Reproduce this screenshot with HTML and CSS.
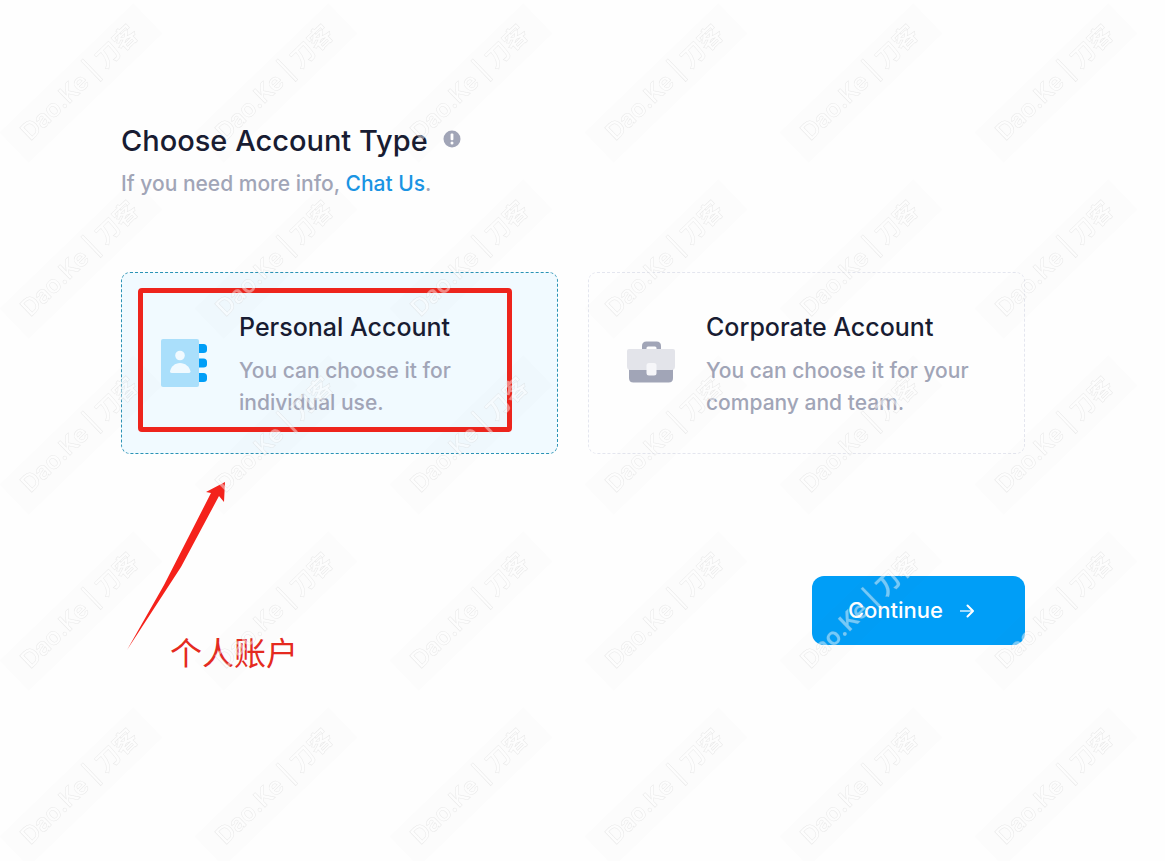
FILE: index.html
```html
<!DOCTYPE html>
<html lang="en">
<head>
    <meta charset="UTF-8">
    <meta name="viewport" content="width=device-width, initial-scale=1.0">
    <title>Choose Account Type</title>
    <link rel="stylesheet" href="styles.css">
</head>
<body>
    <main class="page">
        <header class="heading">
            <h1>Choose Account Type
                <svg class="info" viewBox="0 0 18 18" aria-hidden="true">
                    <circle cx="9" cy="9" r="8.500" fill="#a1a5b7"/>
                    <rect x="7.600" y="3.600" width="2.800" height="6.600" rx="1" fill="#fff"/>
                    <circle cx="9" cy="13" r="1.500" fill="#fff"/>
                </svg>
            </h1>
            <p>If you need more info, <a href="#">Chat Us</a>.</p>
        </header>

        <form class="account-form">
            <div class="options">
                <div class="option">
                    <input type="radio" name="account_type" id="personal" checked>
                    <label class="card" for="personal">
                        <svg class="card-icon" viewBox="0 0 48 48" aria-hidden="true">
                            <path d="M37 5h6.500q3.500 0 3.500 3.500v2.500q0 3-3.500 3h-6.500zM37 19.500h6.500q3.500 0 3.500 3.500v2.500q0 3-3.500 3h-6.500zM37 34h6.500q3.500 0 3.500 3.500v2.500q0 3-3.500 3h-6.500z" fill="#009ef7"/>
                            <rect x="1" width="38" height="48" rx="2" fill="#aadffb"/>
                            <circle cx="20" cy="16.500" r="4.800" fill="#f1faff"/>
                            <path d="M10 32.500c1-5 5-8.500 10-8.500s9.500 3.500 10.500 8.500q0 1.500-2 1.500h-16.500q-2 0-2-1.500z" fill="#f1faff"/>
                        </svg>
                        <span class="card-body">
                            <span class="card-title">Personal Account</span>
                            <span class="card-text">You can choose it for individual use.</span>
                        </span>
                    </label>
                    <div class="mark-box"></div>
                    <svg class="mark-arrow" viewBox="0 0 98 168" aria-hidden="true">
                        <path d="M0 168L37 103 84 11 79 10 98 0 97 20 92 14 54 85z" fill="#f5221b"/>
                    </svg>
                    <div class="mark-label" lang="zh">个人账户</div>
                </div>
                <div class="option">
                    <input type="radio" name="account_type" id="corporate">
                    <label class="card" for="corporate">
                        <svg class="card-icon" viewBox="-1 0 48 48" aria-hidden="true">
                            <path d="M14 11V7q0-4.500 4.500-4.500h10q4.500 0 4.500 4.500v4h-4.500V9q0-1.500-1.500-1.500h-7q-1.500 0-1.500 1.500v2z" fill="#a1a5b7"/>
                            <path d="M1 30h44v9q0 4.500-4.500 4.500h-35q-4.500 0-4.500-4.500z" fill="#a1a5b7"/>
                            <path d="M1 10h44q2 0 2 2v15q0 4-3 4h-42q-3 0-3-4v-15q0-2 2-2z" fill="#e3e4ea"/>
                            <rect x="18.500" y="24" width="10" height="12.500" rx="2.500" fill="#f6f6f9"/>
                        </svg>
                        <span class="card-body">
                            <span class="card-title">Corporate Account</span>
                            <span class="card-text">You can choose it for your company and team.</span>
                        </span>
                    </label>
                </div>
            </div>

            <div class="actions">
                <button type="button" class="continue">Continue
                    <svg viewBox="0 0 16 16" aria-hidden="true">
                        <path d="M1 8h12" stroke="#c5e9ff" stroke-width="1.600"/>
                        <path d="M8.500 2.500L14 8l-5.500 5.500" stroke="#fff" stroke-width="2" fill="none" stroke-linecap="round" stroke-linejoin="round"/>
                    </svg>
                </button>
            </div>
        </form>
    </main>

    <svg class="watermark" aria-hidden="true">
        <defs>
            <pattern id="wm" width="195" height="176" patternUnits="userSpaceOnUse">
                <g transform="rotate(-44 81 83)">
                    <rect class="wm-band" x="-12" y="62" width="186" height="42"/>
                    <text class="wm-text" x="80" y="90" text-anchor="middle">Dao.Ke | 刀客</text>
                </g>
            </pattern>
        </defs>
        <rect width="100%" height="100%" fill="url(#wm)"/>
    </svg>
</body>
</html>
```
FILE: styles.css
```css
* {
    box-sizing: border-box;
}
body {
    margin: 0;
    min-height: 100vh;
    position: relative;
    background: #fefefe;
    color: #181c32;
    font-family: Inter, "Noto Sans CJK SC", sans-serif;
    font-weight: 500;
}
.page {
    padding: 121px 140px 0 121px;
}
h1 {
    margin: 0;
    font-size: 29px;
    font-weight: 500;
    line-height: 40px;
}
.info {
    width: 18px;
    height: 18px;
    margin-left: 8px;
    vertical-align: 3px;
}
.heading p {
    margin: 7px 0 0;
    color: #a1a5b7;
    font-size: 21px;
    line-height: 32px;
}
.heading a {
    color: #1a94e3;
    text-decoration: none;
}

/* account type cards */
.options {
    display: grid;
    grid-template-columns: 1fr 1fr;
    gap: 30px;
    margin-top: 72px;
}
.option {
    position: relative;
}
.option input {
    position: absolute;
    opacity: 0;
}
.card {
    display: flex;
    align-items: center;
    height: 100%;
    padding: 34px 38px;
    border: 1px dashed #e4e6ef;
    border-radius: 9px;
    cursor: pointer;
}
input:checked + .card {
    background: #f1faff;
    border-color: #2a93b5;
}
.card-icon {
    flex: none;
    width: 48px;
    height: 48px;
    margin-right: 31px;
}
.card-body {
    padding-top: 2px;
}
.card-title {
    display: block;
    margin-bottom: 10px;
    font-size: 25px;
    line-height: 36px;
}
.card-text {
    display: block;
    color: #a1a5b7;
    font-size: 21px;
    line-height: 32px;
}

/* red annotation */
.mark-box {
    position: absolute;
    top: 16px;
    left: 17px;
    width: 374px;
    height: 144px;
    border: 5px solid #ee241c;
    border-radius: 4px;
    pointer-events: none;
}
.mark-arrow {
    position: absolute;
    top: 210px;
    left: 6px;
    width: 98px;
    height: 168px;
}
.mark-label {
    position: absolute;
    top: 355px;
    left: 49px;
    color: #e52a20;
    font-family: "Noto Sans CJK SC", sans-serif;
    font-size: 32px;
    font-weight: 400;
    line-height: 48px;
}

.actions {
    display: flex;
    justify-content: flex-end;
    margin-top: 122px;
}
.continue {
    display: flex;
    align-items: center;
    gap: 16px;
    padding: 18px 50px 19px 36px;
    border: none;
    border-radius: 12px;
    background: #009ef7;
    color: #fff;
    font: inherit;
    font-size: 22px;
    line-height: 32px;
    cursor: pointer;
}
.continue svg {
    width: 16px;
    height: 16px;
    margin-top: 2px;
}

.watermark {
    position: absolute;
    inset: 0;
    width: 100%;
    height: 100%;
    pointer-events: none;
}
.wm-band {
    fill: rgba(120, 120, 120, 0.01);
}
.wm-text {
    fill: rgba(255, 255, 255, 0.45);
    stroke: rgba(150, 150, 150, 0.2);
    stroke-width: 0.5px;
    font-size: 24px;
    font-weight: 600;
}
```
